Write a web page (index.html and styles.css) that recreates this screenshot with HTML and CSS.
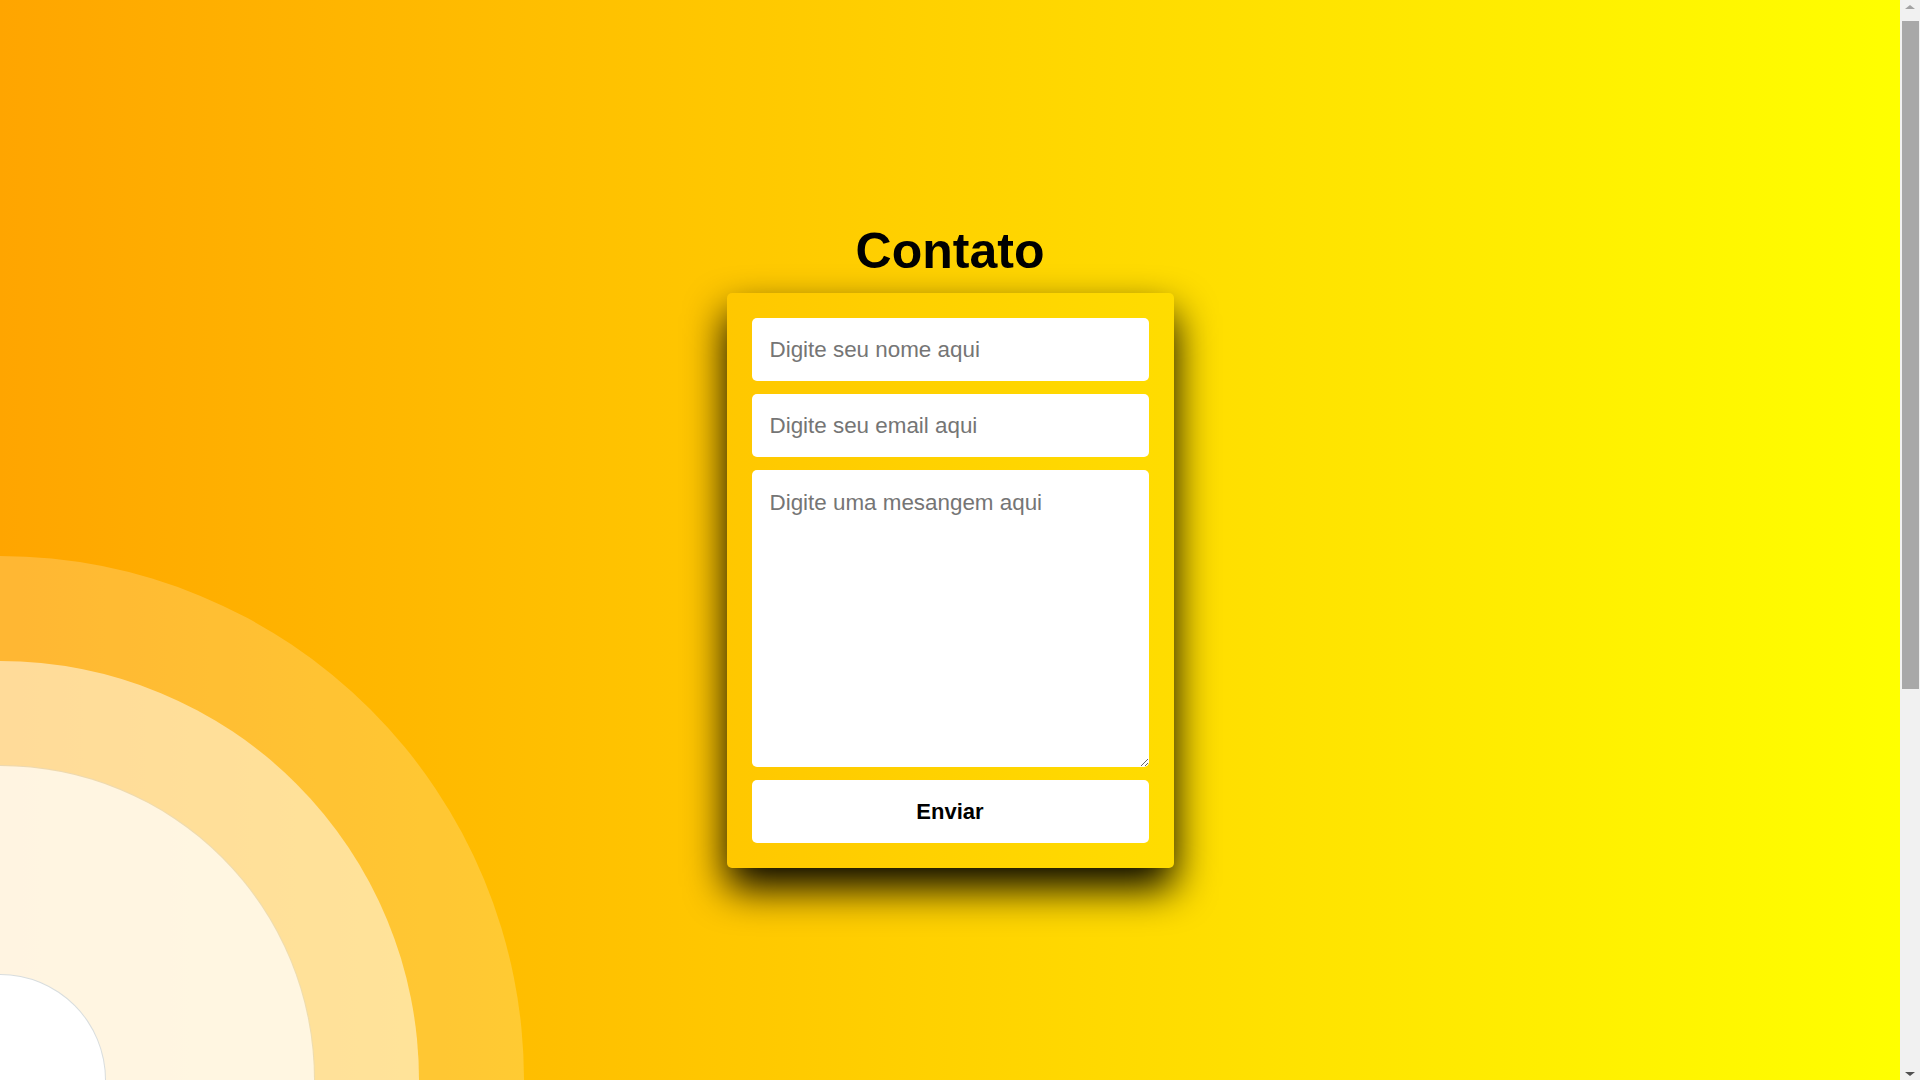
FILE: index.html
```html
<!DOCTYPE html>
<html lang="pt-BR">
<head>
<meta charset="UTF-8">
<title>Contato</title>
<link rel="stylesheet" href="styles.css">
</head>
<body>
<div class="decor" aria-hidden="true">
  <div class="circle c1"></div>
  <div class="circle c2"></div>
  <div class="circle c3"></div>
  <div class="circle c4"></div>
</div>
<main class="page">
  <h1 class="title">Contato</h1>
  <form class="contact-form">
    <input class="field" type="text" placeholder="Digite seu nome aqui">
    <input class="field" type="email" placeholder="Digite seu email aqui">
    <textarea class="field message" placeholder="Digite uma mesangem aqui"></textarea>
    <button class="send" type="button">Enviar</button>
  </form>
</main>
<div class="scrollbar" aria-hidden="true">
  <span class="sb-button"><span class="arrow-up"></span></span>
  <span class="sb-thumb"></span>
  <span class="sb-button sb-bottom"><span class="arrow-down"></span></span>
</div>
</body>
</html>
```
FILE: styles.css
```css
html {
  margin: 0;
  padding: 0;
  background: #f1f1f1;
}

body {
  margin: 0 20px 0 0;
  padding: 0;
  min-height: 1691px;
  background: linear-gradient(to right, #ffa500, #ffff00);
  font-family: "Liberation Sans", Arial, sans-serif;
  position: relative;
  overflow: hidden;
}

.decor {
  position: absolute;
  left: 0;
  top: 0;
  width: 0;
  height: 0;
}

.circle {
  position: absolute;
  border-radius: 50%;
}

.c1 {
  width: 1048px;
  height: 1048px;
  left: -524px;
  top: 556px;
  background: rgba(255, 255, 255, 0.2);
}

.c2 {
  width: 838px;
  height: 838px;
  left: -419px;
  top: 661px;
  background: rgba(255, 255, 255, 0.5);
}

.c3 {
  width: 628px;
  height: 628px;
  left: -314px;
  top: 766px;
  background: rgba(255, 255, 255, 0.7);
  box-shadow: 0 0 0 1px rgba(200, 212, 225, 0.35);
}

.c4 {
  width: 210px;
  height: 210px;
  left: -105px;
  top: 975px;
  background: #ffffff;
  box-shadow: 0 0 0 1px rgba(190, 205, 220, 0.6);
}

.page {
  position: relative;
  display: flex;
  flex-direction: column;
  align-items: center;
  padding-top: 223px;
}

.title {
  margin: 0 0 13px;
  font-size: 50px;
  font-weight: bold;
  color: #000;
  line-height: 57px;
}

.contact-form {
  width: 447px;
  box-sizing: border-box;
  padding: 25px;
  display: flex;
  flex-direction: column;
  gap: 13px;
  border-radius: 5px;
  background: transparent;
  box-shadow: 0 20px 40px #000;
}

.field {
  box-sizing: border-box;
  width: 100%;
  height: 63px;
  border: none;
  border-radius: 5px;
  background: #fff;
  padding: 0 18px;
  font-family: "Liberation Sans", Arial, sans-serif;
  font-size: 22.4px;
  color: #000;
  outline: none;
}

.field::placeholder {
  color: #757575;
}

.message {
  height: 297px;
  padding: 20px 18px 18px;
  resize: vertical;
}

.send {
  height: 63px;
  border: none;
  border-radius: 5px;
  background: #fff;
  font-family: "Liberation Sans", Arial, sans-serif;
  font-size: 22px;
  font-weight: bold;
  color: #000;
  cursor: pointer;
}

/* classic browser scrollbar */
.scrollbar {
  position: fixed;
  top: 0;
  right: 0;
  width: 20px;
  height: 100vh;
  background: #f1f1f1;
  display: flex;
  flex-direction: column;
  align-items: center;
}

.sb-button {
  height: 17px;
  width: 20px;
  display: flex;
  align-items: center;
  justify-content: center;
  flex: none;
}

.sb-bottom {
  margin-top: auto;
}

.arrow-up {
  width: 0;
  height: 0;
  border-left: 5px solid transparent;
  border-right: 5px solid transparent;
  border-bottom: 4px solid #a3a3a3;
  margin-top: -4px;
}

.arrow-down {
  width: 0;
  height: 0;
  border-left: 5px solid transparent;
  border-right: 5px solid transparent;
  border-top: 4px solid #505050;
  margin-top: 4px;
}

.sb-thumb {
  display: block;
  flex: none;
  width: 17px;
  height: 668px;
  margin-top: 4px;
  margin-left: 1px;
  background: #a8a8a8;
}
```
